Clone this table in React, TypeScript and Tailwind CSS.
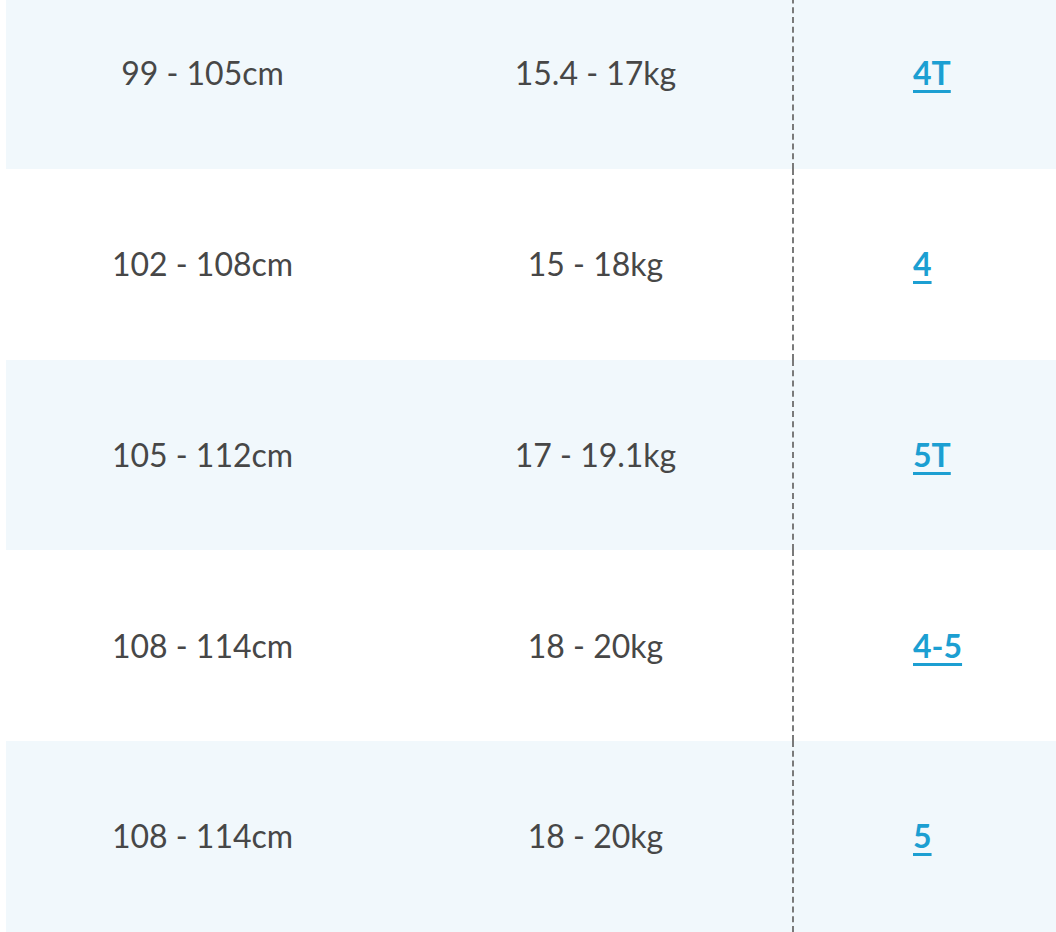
const rows = [
  { height: '99 - 105cm', weight: '15.4 - 17kg', size: '4T' },
  { height: '102 - 108cm', weight: '15 - 18kg', size: '4' },
  { height: '105 - 112cm', weight: '17 - 19.1kg', size: '5T' },
  { height: '108 - 114cm', weight: '18 - 20kg', size: '4-5' },
  { height: '108 - 114cm', weight: '18 - 20kg', size: '5' },
]

export default function App() {
  return (
    <div className="h-[932px] w-[1056px] overflow-hidden bg-white pl-[6px] font-['Lato',sans-serif] text-[32px] text-[#474747]">
      <div className="-mt-[22px]">
        {rows.map((r, i) => (
          <div key={i} className={`flex h-[190.75px] items-center ${i % 2 === 0 ? 'bg-[#f1f8fc]' : 'bg-white'}`}>
            <div className="w-[393px] text-center">{r.height}</div>
            <div className="w-[393px] text-center">{r.weight}</div>
            <div className="flex h-full flex-1 items-center border-l-2 border-dashed border-[#7a7a7a] pl-[119px]">
              <a href="#" className="font-bold text-[#1c9fd2] underline decoration-[3px] underline-offset-[5px]">
                {r.size}
              </a>
            </div>
          </div>
        ))}
      </div>
    </div>
  )
}
